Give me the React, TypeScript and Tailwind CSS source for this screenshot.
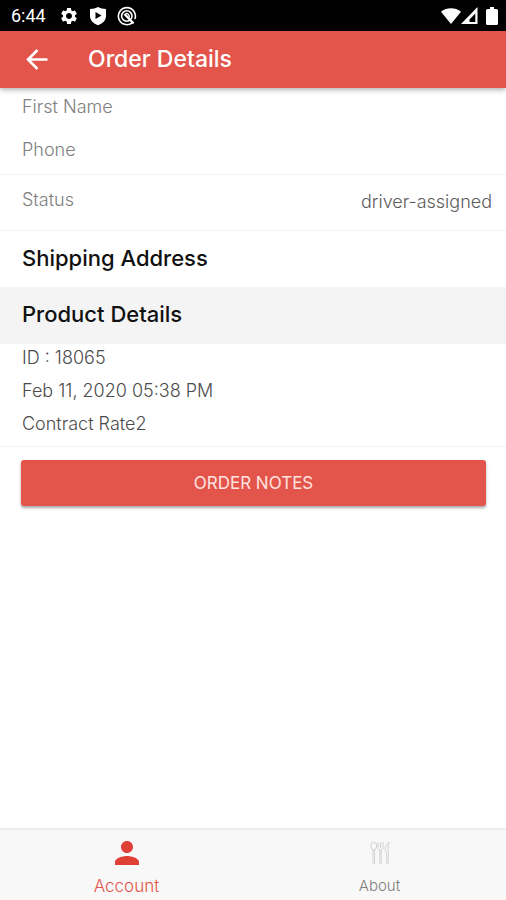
import type { ReactNode } from 'react'
import { MdPerson, MdSettings } from 'react-icons/md'

const productLines = ['ID : 18065', 'Feb 11, 2020 05:38 PM', 'Contract Rate2']

function ShieldPlayIcon() {
  return (
    <svg viewBox="0 0 18 20" className="h-5 w-[18px]" aria-hidden="true">
      <path
        fill="#fff"
        fillRule="evenodd"
        d="M9 1C7 2.300 4 3 1 3v7c0 4.500 3.500 7.500 8 9.300 4.500-1.800 8-4.800 8-9.300V3C14 3 11 2.300 9 1ZM6.500 6v7L12.500 9.500Z"
      />
    </svg>
  )
}

function RadarIcon() {
  return (
    <svg
      viewBox="0 0 20 20"
      className="size-5"
      fill="none"
      stroke="#fff"
      strokeWidth="1.600"
      aria-hidden="true"
    >
      <path d="M15.200 16.800A8.500 8.500 0 1 1 17.900 13" />
      <circle cx="9.800" cy="10" r="5.200" />
      <path d="M7.500 8 16.500 17.500" strokeWidth="2.400" />
      <path d="M8.500 7.500c2.500-.5 4 1.500 3.800 4" strokeWidth="1.400" />
    </svg>
  )
}

function WifiIcon() {
  return (
    <svg viewBox="0 0 20 16" className="h-4 w-5" aria-hidden="true">
      <path fill="#fff" d="M0 3.800C5.500-.8 14.500-.8 20 3.800L10 16Z" />
    </svg>
  )
}

function SignalIcon() {
  return (
    <svg viewBox="0 0 17 17" className="size-[17px]" aria-hidden="true">
      <path
        fill="#fff"
        fillRule="evenodd"
        d="M16.500 0v17H0ZM14.300 6.500 8.500 12.500V15h5.800Z"
      />
    </svg>
  )
}

function BatteryIcon() {
  return (
    <svg viewBox="0 0 12 18" className="h-[18px] w-3" aria-hidden="true">
      <path
        fill="#fff"
        d="M4 0h4v2h2.500A1.500 1.500 0 0 1 12 3.500v13a1.500 1.500 0 0 1-1.500 1.500h-9A1.500 1.500 0 0 1 0 16.500v-13A1.500 1.500 0 0 1 1.500 2H4Z"
      />
    </svg>
  )
}

function BackIcon() {
  return (
    <svg
      viewBox="0 0 24 24"
      className="size-6"
      fill="none"
      stroke="currentColor"
      strokeWidth="2.600"
      aria-hidden="true"
    >
      <path d="M23.500 11.500H4M13.500 2 4 11.500l9.500 9.500" />
    </svg>
  )
}

function CutleryIcon() {
  return (
    <svg
      viewBox="0 0 20 24"
      className="h-6 w-5"
      fill="none"
      stroke="#d2d2d2"
      strokeWidth="1"
      strokeLinecap="round"
      aria-hidden="true"
    >
      <ellipse cx="3.800" cy="5" rx="2.800" ry="3.800" />
      <path d="M3 9v13.500M4.600 9v13.500" />
      <path d="M8 1.500v4.500c0 4 5 4 5 0V1.500M10.500 1.500v5M9.800 9.500v13M11.200 9.500v13" />
      <path d="M19 1.500c-4 1-5 8-2.300 10.500v10.500M19 1.500c-1.500 3-.5 7-.7 10.500v10.500" />
    </svg>
  )
}

function StatusBar() {
  return (
    <div className="flex h-[31px] items-center justify-between bg-black pr-2 pl-[11px] text-white">
      <div className="flex items-center">
        <span className="w-12 font-[Roboto,sans-serif] text-lg leading-none font-normal">
          6:44
        </span>
        <div className="flex items-center gap-[10px]">
          <MdSettings className="size-5" aria-hidden="true" />
          <ShieldPlayIcon />
          <RadarIcon />
        </div>
      </div>
      <div className="flex items-center">
        <WifiIcon />
        <SignalIcon />
        <span className="ml-2 flex">
          <BatteryIcon />
        </span>
      </div>
    </div>
  )
}

function Row({ label, value }: { label: string; value?: string }) {
  return (
    <div className="flex h-14 items-center justify-between border-b border-[#f3f3f3] pr-[14px] pb-[2px] pl-[22px]">
      <span className="pb-1 text-[#808080]">{label}</span>
      <span className="text-[#5c5c5c]">{value}</span>
    </div>
  )
}

function Tab({
  label,
  className,
  children,
}: {
  label: string
  className: string
  children: ReactNode
}) {
  return (
    <a
      href="#"
      className={`flex flex-1 flex-col items-center gap-2 pt-[7px] ${className}`}
    >
      <span className="flex h-8 items-center">{children}</span>
      <span className="leading-[18px]">{label}</span>
    </a>
  )
}

function App() {
  return (
    <div className="flex min-h-screen flex-col bg-white font-[Inter,sans-serif] text-lg font-light">
      <StatusBar />

      <header className="relative flex h-[57px] items-center bg-[#e3544b] pl-6 text-white shadow-[0_2px_5px_rgba(0,0,0,0.3)]">
        <button type="button" aria-label="Back" className="w-16">
          <BackIcon />
        </button>
        <h1 className="text-[23px] font-medium">Order Details</h1>
      </header>

      <main className="flex-1">
        <div className="border-b border-[#f3f3f3] px-[22px] pt-1 pb-2 text-[#808080]">
          <p className="mb-3 leading-[30px]">First Name</p>
          <p className="leading-8">Phone</p>
        </div>
        <Row label="Status" value="driver-assigned" />
        <h2 className="flex h-14 items-center px-[22px] pb-[2px] text-[22px] font-medium text-[#111]">
          Shipping Address
        </h2>
        <h2 className="flex h-[57px] items-center bg-[#f4f4f4] px-[22px] pb-[2px] text-[22px] font-medium text-[#111]">
          Product Details
        </h2>
        <div className="border-b border-[#f3f3f3] px-[22px] pb-[3px] text-[#4c4c4c]">
          {productLines.map((line) => (
            <p key={line} className="pb-[5px] leading-7">
              {line}
            </p>
          ))}
        </div>
        <div className="pt-[13px] pr-5 pl-[21px]">
          <button
            type="button"
            className="h-[46px] w-full rounded-[3px] bg-[#e3544b] text-[17px] font-normal text-[#ffe4e0] shadow-[0_2px_3px_rgba(0,0,0,0.35)]"
          >
            ORDER NOTES
          </button>
        </div>
      </main>

      <nav className="flex h-[72px] border-t-2 border-[#ededed] bg-[#f8f8f8]">
        <Tab label="Account" className="text-[17px] text-[#e3544b]">
          <MdPerson className="size-9 text-[#df3f35]" aria-hidden="true" />
        </Tab>
        <Tab label="About" className="text-[15px] text-[#808080]">
          <CutleryIcon />
        </Tab>
      </nav>
    </div>
  )
}

export default App
